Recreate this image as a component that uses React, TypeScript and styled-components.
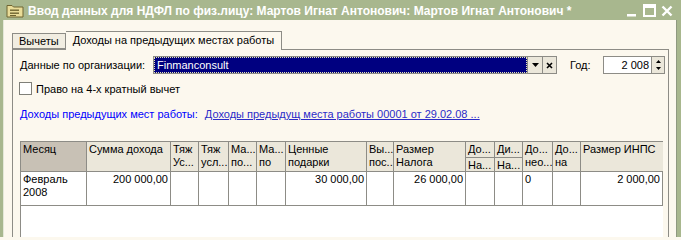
import React from 'react'
import styled, { createGlobalStyle } from 'styled-components'

const GlobalStyle = createGlobalStyle`
  html, body {
    margin: 0;
    padding: 0;
    background: #fcf8ee;
  }
  * {
    box-sizing: border-box;
  }
`

const FONT = `"Liberation Sans", Arial, sans-serif`

type Head = { lines: string[]; span?: boolean; dark?: boolean }

const heads: Head[] = [
  { lines: ['Месяц'], span: true, dark: true },
  { lines: ['Сумма дохода'], span: true },
  { lines: ['Тяж', 'Ус...', 'ст...'], span: true },
  { lines: ['Тяж', 'усл...', 'ост...'], span: true },
  { lines: ['Ма...', 'по...'], span: true },
  { lines: ['Ма...', 'по'], span: true },
  { lines: ['Ценные', 'подарки'], span: true },
  { lines: ['Вы...', 'пос...'], span: true },
  { lines: ['Размер', 'Налога'], span: true },
  { lines: ['До...'] },
  { lines: ['Ди...'] },
  { lines: ['До...', 'нео...', 'НДФ...'], span: true },
  { lines: ['До...', 'на'], span: true },
  { lines: ['Размер ИНПС'], span: true },
  { lines: ['На...'] },
  { lines: ['На...'] },
]

const row: { text: string; right?: boolean }[] = [
  { text: 'Февраль 2008' },
  { text: '200 000,00', right: true },
  { text: '' },
  { text: '' },
  { text: '' },
  { text: '' },
  { text: '30 000,00', right: true },
  { text: '' },
  { text: '26 000,00', right: true },
  { text: '' },
  { text: '' },
  { text: '0' },
  { text: '' },
  { text: '2 000,00', right: true },
]

const cols = [66, 84, 28, 30, 28, 29, 81, 27, 72, 29, 28, 30, 28, 82]

const FolderIcon = () => (
  <svg width='18' height='14' viewBox='0 0 18 14'>
    <path d='M1 1.5h5l1.5 1.5H17v10H1z' fill='#e9dc98' stroke='#6f6430' strokeWidth='1' />
    <rect x='4' y='5.5' width='9' height='1.4' fill='#6f6430' />
    <rect x='4' y='8.5' width='9' height='1.4' fill='#6f6430' />
    <rect x='4' y='11' width='6' height='1' fill='#6f6430' />
  </svg>
)

const WinButtons = () => (
  <Controls>
    <svg width='12' height='12' viewBox='0 0 12 12'>
      <rect x='1' y='9' width='9' height='2.5' fill='#fff' />
    </svg>
    <svg width='13' height='13' viewBox='0 0 13 13'>
      <rect x='1' y='1' width='11' height='11' fill='none' stroke='#fff' strokeWidth='2' />
      <rect x='1' y='1' width='11' height='3' fill='#fff' />
    </svg>
    <svg width='12' height='12' viewBox='0 0 12 12'>
      <path d='M1.5 1.5l9 9M10.5 1.5l-9 9' stroke='#fff' strokeWidth='2.4' />
    </svg>
  </Controls>
)

const App = () => {
  return (
    <Window>
      <GlobalStyle />
      <TitleBar>
        <FolderIcon />
        <Title>Ввод данных для НДФЛ по физ.лицу: Мартов Игнат Антонович: Мартов Игнат Антонович *</Title>
        <WinButtons />
      </TitleBar>
      <Body>
        <Tabs>
          <Tab>Вычеты</Tab>
          <Tab active>Доходы на предыдущих местах работы</Tab>
        </Tabs>
        <Panel>
          <FieldRow>
            <Label>Данные по организации:</Label>
            <Combo>
              <ComboText>Finmanconsult</ComboText>
            </Combo>
            <SmallBtn>
              <svg width='7' height='4' viewBox='0 0 7 4'>
                <path d='M0 0h7L3.5 4z' fill='#000' />
              </svg>
            </SmallBtn>
            <SmallBtn narrow>
              <svg width='7' height='7' viewBox='0 0 7 7'>
                <path d='M1 1l5 5M6 1l-5 5' stroke='#000' strokeWidth='1.6' />
              </svg>
            </SmallBtn>
            <YearLabel>Год:</YearLabel>
            <YearInput>2 008</YearInput>
            <Spinner>
              <svg width='5' height='3' viewBox='0 0 5 3'>
                <path d='M2.5 0L5 3H0z' fill='#000' />
              </svg>
              <svg width='5' height='3' viewBox='0 0 5 3'>
                <path d='M0 0h5L2.5 3z' fill='#000' />
              </svg>
            </Spinner>
          </FieldRow>
          <CheckRow>
            <CheckBox />
            <span>Право на 4-х кратный вычет</span>
          </CheckRow>
          <LinkRow>
            <Caption>Доходы предыдущих мест работы:</Caption>
            <DocLink>Доходы предыдущ места работы 00001 от 29.02.08 ...</DocLink>
          </LinkRow>
          <Grid cols={cols}>
            {heads.map((h, i) => (
              <HeadCell key={i} span={h.span} dark={h.dark}>
                {h.lines.map((l, j) => (
                  <div key={j}>{l}</div>
                ))}
              </HeadCell>
            ))}
            {row.map((c, i) => (
              <DataCell key={i} right={c.right}>
                {c.text}
              </DataCell>
            ))}
            <Filler />
          </Grid>
        </Panel>
      </Body>
    </Window>
  )
}

const Window = styled.div`
  width: 681px;
  height: 237px;
  overflow: hidden;
  background: #a8b78e;
  display: flex;
  flex-direction: column;
  font-family: ${FONT};
  font-size: 11px;
  color: #000;
`

const TitleBar = styled.div`
  height: 20px;
  flex: none;
  display: flex;
  align-items: center;
  padding: 1px 0 0 6px;
  gap: 4px;
`

const Title = styled.div`
  flex: 1;
  color: #fff;
  font-weight: bold;
  font-size: 12px;
  white-space: nowrap;
  overflow: hidden;
`

const Controls = styled.div`
  display: flex;
  align-items: center;
  gap: 5px;
  padding-right: 8px;
`

const Body = styled.div`
  flex: 1;
  margin: 0 4px 0 3px;
  background: #fcf8ee;
  border-left: 1px solid #e4e8d8;
  border-right: 1px solid #8f9980;
  padding: 10px 7px 0 8px;
  display: flex;
  flex-direction: column;
  min-height: 0;
`

const Tabs = styled.div`
  display: flex;
  align-items: flex-end;
  height: 19px;
  flex: none;
  position: relative;
  z-index: 1;
`

const Tab = styled.div<{ active?: boolean }>`
  height: ${p => (p.active ? '19px' : '16px')};
  margin-bottom: ${p => (p.active ? '-1px' : '0')};
  padding: ${p => (p.active ? '2px 7px 0 7px' : '1px 6px 0 6px')};
  background: ${p => (p.active ? '#fcf8ee' : '#f1ede1')};
  border: 1px solid #8d8c86;
  border-bottom: ${p => (p.active ? 'none' : '1px solid #8d8c86')};
  border-left: ${p => (p.active ? 'none' : '1px solid #8d8c86')};
  white-space: nowrap;
`

const Panel = styled.div`
  flex: 1;
  border: 1px solid #8d8c86;
  border-bottom: none;
  padding: 6px 3px 0 7px;
  display: flex;
  flex-direction: column;
  min-height: 0;
`

const FieldRow = styled.div`
  display: flex;
  align-items: center;
  height: 18px;
`

const Label = styled.div`
  width: 133px;
  white-space: nowrap;
`

const Combo = styled.div`
  width: 375px;
  height: 18px;
  background: #000080;
  border: 1px solid #8d8c86;
  padding: 1px;
`

const ComboText = styled.div`
  height: 100%;
  color: #fff;
  outline: 1px dotted #e8e4b8;
  padding-left: 2px;
  line-height: 14px;
`

const SmallBtn = styled.div<{ narrow?: boolean }>`
  width: ${p => (p.narrow ? '14px' : '15px')};
  height: 18px;
  background: #ebe7da;
  border: 1px solid #8d8c86;
  border-left: none;
  display: flex;
  align-items: center;
  justify-content: center;
`

const YearLabel = styled.div`
  margin-left: 13px;
  width: 33px;
`

const YearInput = styled.div`
  width: 49px;
  height: 18px;
  background: #fff;
  border: 1px solid #8d8c86;
  text-align: right;
  padding-right: 2px;
  line-height: 16px;
`

const Spinner = styled.div`
  width: 13px;
  height: 18px;
  background: #ebe7da;
  border: 1px solid #8d8c86;
  border-left: none;
  display: flex;
  flex-direction: column;
  align-items: center;
  justify-content: center;
  gap: 4px;
`

const CheckRow = styled.div`
  display: flex;
  align-items: center;
  gap: 4px;
  margin-top: 8px;
  margin-left: -1px;
`

const CheckBox = styled.div`
  width: 13px;
  height: 13px;
  background: #fff;
  border: 1px solid #7f7f78;
`

const LinkRow = styled.div`
  display: flex;
  gap: 7px;
  margin-top: 13px;
  white-space: nowrap;
`

const Caption = styled.span`
  color: #0000ff;
`

const DocLink = styled.span`
  color: #2b2bc8;
  text-decoration: underline;
`

const Grid = styled.div<{ cols: number[] }>`
  margin-top: 21px;
  display: grid;
  grid-template-columns: ${p => p.cols.map(c => `${c}px`).join(' ')};
  grid-template-rows: 16px 14px 34px 60px;
  width: 643px;
  border-left: 1px solid #8d8c86;
  border-top: 1px solid #8d8c86;
  border-right: 1px solid #8d8c86;
  line-height: 13px;
`

const HeadCell = styled.div<{ span?: boolean; dark?: boolean }>`
  grid-row: ${p => (p.span ? 'span 2' : 'auto')};
  background: ${p => (p.dark ? '#c8c1b5' : '#ebe7da')};
  border-right: 1px solid #8d8c86;
  border-bottom: 1px solid #8d8c86;
  padding: 1px 0 0 2px;
  overflow: hidden;
  white-space: nowrap;
  &:nth-child(14) {
    border-right: none;
  }
`

const DataCell = styled.div<{ right?: boolean }>`
  background: #fff;
  border-right: 1px solid #8d8c86;
  border-bottom: 1px solid #8d8c86;
  padding: 1px 2px 0 2px;
  text-align: ${p => (p.right ? 'right' : 'left')};
  overflow: hidden;
  &:last-of-type {
    border-right: none;
  }
`

const Filler = styled.div`
  grid-column: 1 / -1;
  background: #fff;
`

export default App
